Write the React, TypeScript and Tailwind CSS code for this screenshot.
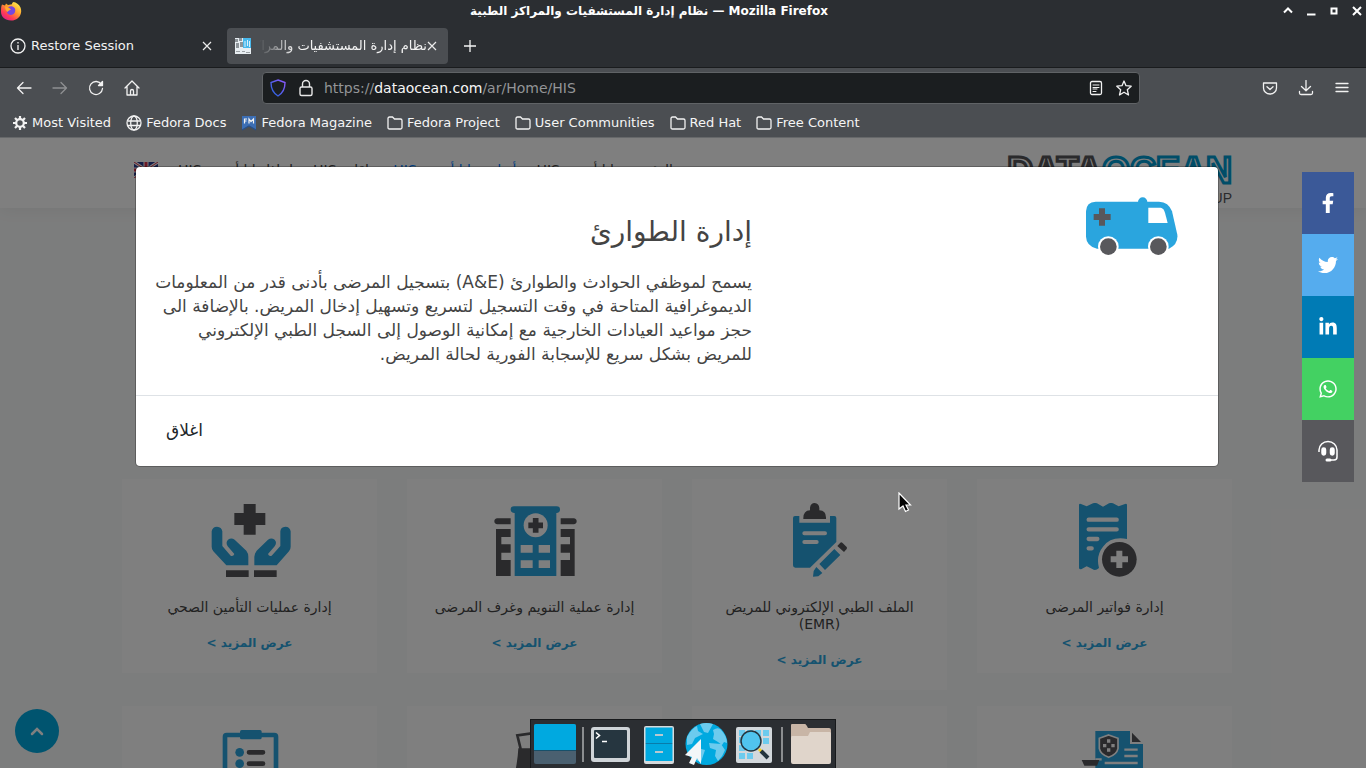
import React from "react";
import { FaFacebookF, FaTwitter, FaLinkedinIn, FaWhatsapp } from "react-icons/fa";

const BLUE = "#2aa5de";
const DARK = "#545458";

function FirefoxLogo() {
  return (
    <svg width="22" height="22" viewBox="0 0 22 22" aria-hidden="true">
      <defs>
        <linearGradient id="ffBody" x1="0.85" y1="0.1" x2="0.2" y2="0.95">
          <stop offset="0" stopColor="#ffe64a" />
          <stop offset="0.4" stopColor="#ff9a2c" />
          <stop offset="0.75" stopColor="#ff3b55" />
          <stop offset="1" stopColor="#e0218a" />
        </linearGradient>
      </defs>
      <path d="M2 2.500C3 3 4 3.200 5 3.500L6 1.500L8 3L12 2.200C12 1 12.500.500 13.500 0C16 .500 19 2 20.500 5.500C23 12 18.500 18.500 11 18.500C5 18.500 1 15 1 9.500C1 7 1 4.500 2 2.500Z" fill="url(#ffBody)" />
      <path d="M7 7.500C7.500 5 10 3.800 12.500 4.500C15 5.300 16 8 14.800 10.500C13.500 13.300 9.500 13.800 7.600 11.500C6.700 10.200 6.700 9 7 7.500Z" fill="#7547e0" />
      <path d="M5 4.500C7 4.500 9 5.500 11 7.500C9.500 8.500 8.500 8.300 7.600 10C6 9 5 6.500 5 4.500Z" fill="#ffab2e" />
    </svg>
  );
}

function TitleBar() {
  return (
    <header className="flex h-[22px] shrink-0 items-center bg-[#2b2e32] text-white">
      <div className="w-5 self-start pt-0.5"><FirefoxLogo /></div>
      <h1 className="flex-1 text-center text-xs leading-[22px] font-bold whitespace-nowrap">
        <bdi>نظام إدارة المستشفيات والمراكز الطبية</bdi> — Mozilla Firefox
      </h1>
      <div className="flex w-[88px] items-center gap-[9px] pl-[3px]">
        {[
          ["Shade", "M4 9.500L8 5.500L12 9.500"],
          ["Minimize", "M4 11.500H12.500"],
          ["Maximize", "M5.500 5.500H10.500V10.500H5.500Z"],
          ["Close", "M4 4L12 12M12 4L4 12"],
        ].map(([name, d]) => (
          <button key={name} aria-label={name} className="shrink-0">
            <svg width="14" height="14" viewBox="1 1 14 14" fill="none" stroke="#fff" strokeWidth="2"><path d={d} /></svg>
          </button>
        ))}
      </div>
    </header>
  );
}

function Cross() {
  return (
    <svg width="10" height="10" viewBox="0 0 10 10" stroke="#ececec" strokeWidth="1.200"><path d="M1 1L9 9M9 1L1 9" /></svg>
  );
}

function TabStrip() {
  return (
    <div className="flex h-[46px] shrink-0 items-center border-b border-[#1a1c1e] bg-[#2b2e32] pt-[3px] text-[13px] text-[#f2f2f2]">
      <div className="flex w-[227px] items-center pl-[10px]">
        <svg width="16" height="16" viewBox="0 0 16 16" fill="none" stroke="#f2f2f2" strokeWidth="1.300">
          <circle cx="8" cy="8" r="7" /><path d="M8 7V12" /><path d="M8 4V5.500" />
        </svg>
        <span className="ml-[5px] flex-1">Restore Session</span>
        <button aria-label="Close tab" className="mr-[15px]"><Cross /></button>
      </div>
      <div className="flex h-9 w-[221px] items-center rounded bg-[#4b4e52] pr-[11px] pl-2">
        <svg width="16" height="16" viewBox="0 0 16 16">
          <path fill="#e8eef2" d="M0 0H16V16H0Z" /><path fill="#48b8ec" d="M8 0H16V10H8Z" />
          <path fill="#8d9499" d="M0 1H3V4H0ZM4 0H7V3H4ZM1 5H4V10H1ZM5 4H8V9H5Z" />
          <path stroke="#d8f0fc" d="M10 3V9M12.500 2V8M14.500 3V9" /><path stroke="#9aa0a4" d="M1 13.500H5M7 13.500H10M11 14.500H15" />
        </svg>
        <span dir="rtl" className="ml-1 min-w-0 flex-1 overflow-hidden whitespace-nowrap [mask-image:linear-gradient(to_right,transparent_4px,black_40px)]">
          نظام إدارة المستشفيات والمراكز الطبية
        </span>
        <button aria-label="Close tab"><Cross /></button>
      </div>
      <button aria-label="New tab" className="ml-4">
        <svg width="12" height="12" viewBox="0 0 12 12" stroke="#f5f5f5" strokeWidth="1.300"><path d="M6 0V12M0 6H12" /></svg>
      </button>
    </div>
  );
}

function Glyph({ children, label, dim = false }: { children: React.ReactNode; label: string; dim?: boolean }) {
  return (
    <button aria-label={label} className={dim ? "opacity-40" : ""}>
      <svg width="16" height="16" viewBox="0 0 16 16" fill="none" stroke="#f2f2f2" strokeWidth="1.300" strokeLinecap="round" strokeLinejoin="round">
        {children}
      </svg>
    </button>
  );
}

function NavBar() {
  return (
    <div className="flex h-10 shrink-0 items-center bg-[#4b4e52] pr-4 pl-4">
      <div className="flex w-[246px] items-center gap-5">
        <Glyph label="Back"><path d="M15 8H1.500M7 2.500L1.500 8L7 13.500" /></Glyph>
        <Glyph label="Forward" dim><path d="M1 8H14.500M9 2.500L14.500 8L9 13.500" /></Glyph>
        <Glyph label="Reload"><path d="M13.500 4.500A6.500 6.500 0 1 0 14.500 8.500" /><path d="M14.500 1.500V5.500H10.500Z" fill="#f2f2f2" /></Glyph>
        <Glyph label="Home"><path d="M1 8L8 1L15 8M3 6.500V15H13V6.500M6.500 15V11A1.500 1.500 0 0 1 9.500 11V15" /></Glyph>
      </div>
      <div className="flex h-8 max-w-[878px] flex-1 items-center rounded border border-[#606366] bg-[#1b1e20] px-[7px]">
        <svg width="16" height="18" viewBox="0 0 16 18" fill="none" strokeWidth="1.400">
          <defs><linearGradient id="shield" x1="1" y1="0" x2="0" y2="1"><stop stopColor="#9059ff" /><stop offset="1" stopColor="#1f63d8" /></linearGradient></defs>
          <path d="M8 1L15 3.500C15 10 13 14 8 17C3 14 1 10 1 3.500Z" stroke="url(#shield)" />
        </svg>
        <svg className="ml-3" width="16" height="18" viewBox="0 0 16 18" fill="none" stroke="#e8e8e8" strokeWidth="1.400">
          <rect x="2" y="8" width="12" height="8.500" rx="1.500" /><path d="M4.500 8V5A3.500 3.500 0 0 1 11.500 5V8" />
        </svg>
        <label className="sr-only" htmlFor="address">Address</label>
        <div className="relative ml-[10px] flex-1 text-sm leading-[30px]">
          <div aria-hidden="true" className="text-[#939597]">https://<span className="text-[#f5f5f5]">dataocean.com</span>/ar/Home/HIS</div>
          <input id="address" defaultValue="https://dataocean.com/ar/Home/HIS" className="absolute inset-0 w-full bg-transparent text-transparent outline-none" />
        </div>
        <div className="flex items-center gap-3">
          <Glyph label="Reader view"><rect x="2.500" y="1.500" width="11" height="13" rx="1.500" /><path d="M5 5H11M5 7.500H11M5 9H9M5 11.500H8" strokeWidth="1" /></Glyph>
          <Glyph label="Bookmark"><path d="M8 1L10 5.700L15.200 6.200L11.300 9.700L12.500 15L8 12.200L3.500 15L4.700 9.700L.800 6.200L6 5.700Z" /></Glyph>
        </div>
      </div>
      <div className="ml-auto flex items-center gap-5">
        <Glyph label="Pocket"><path d="M1.500 3H14.500V8A6.500 6 0 0 1 1.500 8ZM5 6.800L8 9.500L11 6.800" /></Glyph>
        <Glyph label="Downloads"><path d="M8 .500V10.500M3.500 6.500L8 10.700L12.500 6.500M1.500 11.500V13Q1.500 14.500 3 14.500H13Q14.500 14.500 14.500 13V11.500" /></Glyph>
        <Glyph label="Menu"><path d="M2 3.500H14M2 7.500H14M2 11.500H14" /></Glyph>
      </div>
    </div>
  );
}

const folder = <path d="M1 3.500Q1 2 2.500 2H5.500L7.500 4H13.500Q15 4 15 5.500V12.500Q15 14 13.500 14H2.500Q1 14 1 12.500Z" />;
const bookmarks: { label: string; icon: React.ReactNode }[] = [
  { label: "Most Visited", icon: <><circle cx="8" cy="8" r="3.800" strokeWidth="2.200" /><path strokeWidth="2.200" strokeLinecap="butt" d="M8 1V4M8 12V15M1 8H4M12 8H15M3 3L5 5M11 11L13 13M3 13L5 11M11 5L13 3" /></> },
  { label: "Fedora Docs", icon: <><circle cx="8" cy="8" r="7" /><ellipse cx="8" cy="8" rx="3.300" ry="7" /><path d="M1.500 6H14.500M1.500 10.500H14.500" /></> },
  { label: "Fedora Magazine", icon: <><path d="M1 1H15V15L8 11L1 15Z" fill="#3c6eb4" stroke="none" /><path d="M1 15L8 11L15 15" stroke="#294f86" /><path d="M3.500 8.500V4H6M3.500 6H5.500M8 8.500V4L10 6.500L12.500 4V8.500" strokeWidth="1.200" /></> },
  { label: "Fedora Project", icon: folder },
  { label: "User Communities", icon: folder },
  { label: "Red Hat", icon: folder },
  { label: "Free Content", icon: folder },
];

function BookmarksBar() {
  return (
    <nav className="flex h-[30px] shrink-0 items-center gap-[15px] border-b border-[#66686a] bg-[#4b4e52] pl-3 text-[13px] text-[#f5f5f5]">
      {bookmarks.map((b) => (
        <a key={b.label} href="#" className="flex items-center gap-1 whitespace-nowrap">
          <svg width="16" height="16" viewBox="0 0 16 16" fill="none" stroke="#f2f2f2" strokeWidth="1.300">{b.icon}</svg>
          {b.label}
        </a>
      ))}
    </nav>
  );
}

function SiteHeader() {
  return (
    <header className="h-[70px] bg-white pr-3 shadow-[0_2px_16px_rgba(0,0,0,0.06)]">
      <div className="mx-auto flex h-full max-w-[1110px] justify-between">
        <div className="flex flex-col pt-[15px]">
          <div dir="ltr" className="text-4xl leading-9 font-bold [font-family:'Liberation_Sans',sans-serif]">
            <span className="text-white [-webkit-text-stroke:3px_#545458]">DATA</span>
            <span className="text-white [-webkit-text-stroke:3px_#009bd0]">OCEAN</span>
          </div>
          <div dir="ltr" className="mt-px text-right text-sm leading-4 text-[#545458] [font-family:'Liberation_Sans',sans-serif]">GROUP</div>
        </div>
        <nav className="mt-4 flex h-8 items-center gap-5 pl-3 text-sm whitespace-nowrap text-[#444]">
          <a href="#">الرئيسية داتا أوشن HIS</a>
          <a href="#" className="text-[#007bff]">أنظمة داتا أوشن HIS</a>
          <a href="#">باقات HIS</a>
          <a href="#">لماذا داتا أوشن HIS</a>
          <a href="#" aria-label="English">
            <svg width="24" height="16" viewBox="0 0 24 16">
              <rect width="24" height="16" rx="2" fill="#2b3a8c" />
              <path d="M0 0L24 16M24 0L0 16" stroke="#fff" strokeWidth="3" /><path d="M0 0L24 16M24 0L0 16" stroke="#d8304a" strokeWidth="1" />
              <path d="M12 0V16M0 8H24" stroke="#fff" strokeWidth="5" /><path d="M12 0V16M0 8H24" stroke="#d8304a" strokeWidth="3" />
            </svg>
          </a>
        </nav>
      </div>
    </header>
  );
}

const invoiceIcon = (
  <svg width="96" height="75" viewBox="258 99 288 225">
    <path fill={BLUE} d="M324 104Q325 100 330 102L347 109L366 100Q372 97 378 100L396 110L414 100Q420 97 426 100L443 109L462 102Q467 100 468 104V207Q420 198 396 230Q374 257 384 294Q373 304 364 297L347 289L332 297Q325 299 324 294Z" />
    <path stroke="#fff" strokeWidth="13" strokeLinecap="round" d="M353 149H437M353 178H437M353 207H379M353 235H362" />
    <circle cx="445" cy="268" r="52" fill={DARK} /><path stroke="#fff" strokeWidth="18" d="M445 242V294M419 268H471" />
  </svg>
);
const emrIcon = (
  <svg width="96" height="75" viewBox="243 99 288 225">
    <path fill={BLUE} d="M306 144Q306 138 312 138H325V158H417V138H430Q436 138 436 144V216L357 293H313Q306 293 306 286Z" />
    <path fill={DARK} d="M337 147Q336 122 357 121V113Q359 99 371 99Q384 100 385 114V121Q407 122 405 147Z" />
    <path stroke="#fff" strokeWidth="12" strokeLinecap="round" d="M340 190H402M340 216H377" />
    <path fill={BLUE} d="M385 282L430 237L448 255L402 300ZM376 291L394 309L382 319L366 320L368 303Z" />
    <path fill={DARK} d="M439 228L448 218Q451 215 454 218L467 231Q469 234 467 237L459 246Z" />
  </svg>
);
const hospitalIcon = (
  <svg width="96" height="75" viewBox="259 99 288 225">
    <path fill={BLUE} d="M342 129Q330 127 330 119Q330 109 340 109H468Q478 109 478 119Q478 128 467 129V318H342Z" />
    <circle cx="405" cy="166" r="36" fill="#fff" /><path stroke={DARK} strokeWidth="17" d="M405 144V188M383 166H427" />
    <path fill="#fff" d="M360 225H396V248H360ZM414 225H448V248H414ZM360 271H396V294H360ZM414 271H448V294H414Z" />
    <path fill={DARK} d="M330 145H290Q281 146 281 154Q281 162 290 163H330ZM480 145H519Q528 146 528 154Q528 162 519 163H480ZM286 177H330V201H302V223H330V248H302V270H330V318H286ZM480 177H522V318H480V270H508V248H480V223H508V201H480Z" />
  </svg>
);
const insuranceIcon = (
  <svg width="96" height="75" viewBox="244 99 288 225">
    <path fill={DARK} d="M369 102H405V129H434V165H405V194H369V165H341V129H369ZM316 301H384V321H316ZM400 301H468V321H400Z" />
    <g fill={BLUE}>
      <path d="M273 184Q275 170 289 170Q303 171 305 184V228L330 257Q338 260 341 252L321 229Q314 217 322 209Q332 202 342 209L377 242Q383 250 383 260V286H317L278 244Q273 238 273 230Z" />
      <path d="M510 184Q508 170 494 170Q480 171 479 184V228L453 257Q445 260 442 252L462 229Q470 217 462 209Q452 202 442 209L408 242Q402 250 401 260V286H468L505 244Q510 238 510 230Z" />
    </g>
  </svg>
);
const policyIcon = (
  <svg width="96" height="75" viewBox="258 783 288 225">
    <path fill={BLUE} d="M373 786H477V825H516V1000H373Z" /><path fill={DARK} d="M483 791L510 819H483Z" />
    <path d="M413 798L441 808V839Q437 857 413 865Q389 857 385 839V808Z" fill={DARK} stroke="#fff" strokeWidth="5" />
    <path fill="#fff" d="M408 811H418V821H408ZM408 838H418V848H408ZM396 825H406V835H396ZM421 825H431V835H421Z" />
    <path stroke="#fff" strokeWidth="7" d="M460 842H500M460 861H500M401 882H500M373 871H392" />
    <path fill={DARK} d="M332 873H385L378 890H340Z" />
  </svg>
);
const bagIcon = (
  <svg width="96" height="75" viewBox="259 783 288 225">
    <path d="M360 840L350 799L450 785L440 840" fill="none" stroke={DARK} strokeWidth="8" />
    <path fill={DARK} d="M353 838H455L470 1005H320Q350 900 353 838Z" />
  </svg>
);
const checklistIcon = (
  <svg width="96" height="75" viewBox="244 783 288 225">
    <rect x="313" y="798" width="153" height="200" rx="5" fill="none" stroke={BLUE} strokeWidth="14" />
    <rect x="358" y="783" width="65" height="28" rx="5" fill={BLUE} />
    <g fill={BLUE}><circle cx="357" cy="850" r="13" /><circle cx="357" cy="884" r="13" /><circle cx="357" cy="918" r="13" /></g>
    <path stroke={DARK} strokeWidth="14" strokeLinecap="round" d="M385 850H427M385 884H427M385 918H427" />
  </svg>
);
const upperCards: { title: string; sub?: string; icon: React.ReactNode }[] = [
  { title: "إدارة فواتير المرضى", icon: invoiceIcon },
  { title: "الملف الطبي الإلكتروني للمريض", sub: "(EMR)", icon: emrIcon },
  { title: "إدارة عملية التنويم وغرف المرضى", icon: hospitalIcon },
  { title: "إدارة عمليات التأمين الصحي", icon: insuranceIcon },
];

function Services() {
  return (
    <section className="flex-1 pt-[271px] pr-3">
      <div className="mx-auto grid max-w-[1110px] grid-cols-4 items-start gap-x-[30px] gap-y-4">
        {upperCards.map((c) => (
          <article key={c.title} className="flex flex-col items-center bg-white pt-6 pb-[18px] text-center">
            {c.icon}
            <h3 className="mt-[21px] text-sm leading-[17px] whitespace-nowrap text-[#444]">
              {c.title}
              {c.sub && <span className="block">{c.sub}</span>}
            </h3>
            <a href="#" className="mt-[15px] text-xs leading-6 font-bold text-[#2aa5de]">عرض المزيد &gt;</a>
          </article>
        ))}
        {[policyIcon, null, bagIcon, checklistIcon].map((icon, i) => (
          <article key={i} className="flex h-[195px] justify-center bg-white pt-6">{icon}</article>
        ))}
      </div>
    </section>
  );
}

function Ambulance() {
  return (
    <svg width="92" height="60" viewBox="319 179 276 180">
      <circle cx="489" cy="194" r="14" fill={BLUE} />
      <path fill={BLUE} d="M319 222Q320 194 348 193H538Q567 194 577 222L593 292Q596 320 568 334H352Q320 326 319 298Z" />
      <path fill="#fff" d="M506 211H543Q552 213 556 226L564 257H506Z" />
      <circle cx="386" cy="328" r="31" fill="#fff" /><circle cx="536" cy="328" r="31" fill="#fff" />
      <circle cx="386" cy="328" r="25" fill="#58585c" /><circle cx="536" cy="328" r="25" fill="#58585c" />
      <path stroke="#58585c" strokeWidth="18" d="M367 213V265M342 239H393" />
    </svg>
  );
}

function Dialog() {
  return (
    <div className="absolute inset-0 flex items-start justify-center bg-black/50 pt-[29px] pr-3">
      <div role="dialog" aria-labelledby="dialog-title" className="mx-6 w-full max-w-[1082px] rounded bg-white shadow-[0_0_0_1px_rgba(0,0,0,0.25)]">
        <div className="flex px-6 pt-[30px] pb-[29px]">
          <div className="w-[442px] shrink-0 pr-4"><Ambulance /></div>
          <div className="min-w-0 flex-1 pt-4 text-[#444]">
            <h2 id="dialog-title" className="text-[28px] leading-[38px]">إدارة الطوارئ</h2>
            <p className="mt-[19px] text-[17px] leading-6 whitespace-nowrap">
              يسمح لموظفي الحوادث والطوارئ (A&amp;E) بتسجيل المرضى بأدنى قدر من المعلومات<br />
              الديموغرافية المتاحة في وقت التسجيل لتسريع وتسهيل إدخال المريض. بالإضافة الى<br />
              حجز مواعيد العيادات الخارجية مع إمكانية الوصول إلى السجل الطبي الإلكتروني<br />
              للمريض بشكل سريع للإسجابة الفورية لحالة المريض.
            </p>
          </div>
        </div>
        <div className="flex h-[71px] items-center justify-end border-t border-[#dee2e6] pl-[30px]">
          <button className="text-[17px] text-[#212529]">اغلاق</button>
        </div>
      </div>
    </div>
  );
}

function SocialRail() {
  return (
    <aside className="absolute top-[34px] right-3 flex w-[52px] flex-col text-white *:flex *:h-[62px] *:items-center *:justify-center">
      <a href="#" aria-label="Facebook" className="bg-[#3b5998]"><FaFacebookF size={20} /></a>
      <a href="#" aria-label="Twitter" className="bg-[#55acee]"><FaTwitter size={20} /></a>
      <a href="#" aria-label="LinkedIn" className="bg-[#007bb5]"><FaLinkedinIn size={20} /></a>
      <a href="#" aria-label="WhatsApp" className="bg-[#43d162]"><FaWhatsapp size={20} /></a>
      <a href="#" aria-label="Support" className="bg-[#58585c]">
        <svg width="20" height="22" viewBox="0 0 20 22" fill="none" stroke="#fff" strokeWidth="1.500">
          <path d="M1 12V10A9 8.500 0 0 1 19 10V17Q19 20 16 20H10" /><path d="M9 20H12" strokeWidth="3" strokeLinecap="round" />
          <rect x="4" y="8" width="3.500" height="7" rx="1.700" fill="#fff" /><rect x="12.500" y="8" width="3.500" height="7" rx="1.700" fill="#fff" />
        </svg>
      </a>
    </aside>
  );
}

function Dock() {
  return (
    <div className="absolute bottom-0 left-[530px] flex h-[49px] items-center border border-b-0 border-[#17191b] bg-[#2b2e32] pr-1 pl-[3px]">
      <button aria-label="Show desktop">
        <svg width="42" height="42" viewBox="0 0 42 42"><rect y="1" width="42" height="40" rx="2" fill="#4a6070" /><path d="M0 27V3Q0 1 2 1H40Q42 1 42 3V27Z" fill="#00a9e0" /><path d="M0 27.500H42" stroke="#17506a" /></svg>
      </button>
      <div className="mx-[6px] h-[35px] w-0.5 bg-[#8b8d8f]" />
      <button aria-label="Terminal">
        <svg width="40" height="42" viewBox="0 0 40 42"><rect x="1" y="4" width="39" height="35" rx="3" fill="#cfd4d8" /><rect x="4" y="7" width="33" height="28" rx="1" fill="#263640" /><path d="M6 9.500L9.500 12.500L6 15.500M12 18.500H17" stroke="#fff" strokeWidth="1.600" fill="none" /></svg>
      </button>
      <button aria-label="Files" className="ml-[13px]">
        <svg width="32" height="42" viewBox="0 0 32 42"><rect x="1" y="3" width="30" height="38" rx="2" fill="#d5dadd" /><path fill="#00a9e0" d="M2.500 4.500H29.500V20H2.500ZM2.500 21H29.500V38H2.500Z" /><path stroke="#087caa" d="M2.500 20.500H29.500" /><path stroke="#b8c8d0" strokeWidth="2" d="M12 12H20M12 29H20" /></svg>
      </button>
      <button aria-label="Web browser" className="ml-[9px]">
        <svg width="44" height="44" viewBox="0 0 44 44"><circle cx="22.500" cy="22" r="21" fill="#00a9e0" />
          <path fill="#6ccbee" d="M16 2Q22 0 29 2L24 11L20 10ZM3 15Q7 7 13 4L14 9L19 12L11 16L8 22L3 23ZM29 8Q35 4 38 9Q43 15 43 21L40 20L38 23L34 20L29 17L30 12ZM25 21L37 22L41 28Q39 34 34 39L31 34L32 28L26 26ZM14 26L21 28L17 40Q12 39 10 35Z" />
          <path fill="#f3f6f8" d="M17 17V42L13 36L10 43L5 41L8 35L1 33Z" /></svg>
      </button>
      <button aria-label="Application finder" className="ml-[7px]">
        <svg width="38" height="42" viewBox="0 0 38 42"><rect x="1" y="4" width="36" height="36" rx="2" fill="#d3d8dc" /><path fill="#6ccbee" d="M4 7H10V13H4ZM12 7H18V13H12ZM20 7H26V13H20ZM28 7H34V13H28ZM28 15H34V21H28ZM4 22H10V28H4ZM4 30H10V36H4ZM12 30H18V36H12ZM4 14H8V20H4Z" />
          <circle cx="16" cy="18" r="10" fill="#50c4ee" stroke="#24343e" strokeWidth="1.500" /><path d="M24 26L27 29" stroke="#f0d020" strokeWidth="3" /><path d="M26 28L33 35" stroke="#24343e" strokeWidth="4" /></svg>
      </button>
      <div className="mx-[8px] h-[35px] w-0.5 bg-[#8b8d8f]" />
      <button aria-label="Home folder">
        <svg width="40" height="42" viewBox="0 0 40 42"><path fill="#c8b5a6" d="M0 2Q0 1 1 1H14Q15 1 17 5H38Q40 5 40 7V20H0Z" /><path fill="#e0d5cb" d="M0 15Q0 13 1 13H17L19 9H39L40 10V39Q40 41 38 41H2Q0 41 0 39Z" /></svg>
      </button>
    </div>
  );
}

export default function App() {
  return (
    <div className="relative flex h-screen flex-col overflow-hidden [font-family:'DejaVu_Sans',sans-serif]">
      <TitleBar />
      <TabStrip />
      <NavBar />
      <BookmarksBar />
      <main dir="rtl" className="relative min-h-0 flex-1 overflow-hidden bg-[#f9fafa]">
        <SiteHeader />
        <Services />
        <button aria-label="Back to top" className="absolute bottom-[15px] left-[15px] flex size-11 items-center justify-center rounded-full bg-[#00a8df]">
          <svg width="14" height="10" viewBox="0 0 14 10" fill="none" stroke="#fff" strokeWidth="2.500" strokeLinecap="round"><path d="M2 8L7 3L12 8" /></svg>
        </button>
        <Dialog />
        <SocialRail />
      </main>
      <svg className="absolute top-[492px] left-[898px]" width="14" height="22" viewBox="0 0 14 22" aria-hidden="true">
        <path d="M1 1V17L5 14L7.500 19.500L10.500 18L8 13H12.500Z" fill="#050505" stroke="#fff" strokeWidth="1.200" />
      </svg>
      <Dock />
    </div>
  );
}
